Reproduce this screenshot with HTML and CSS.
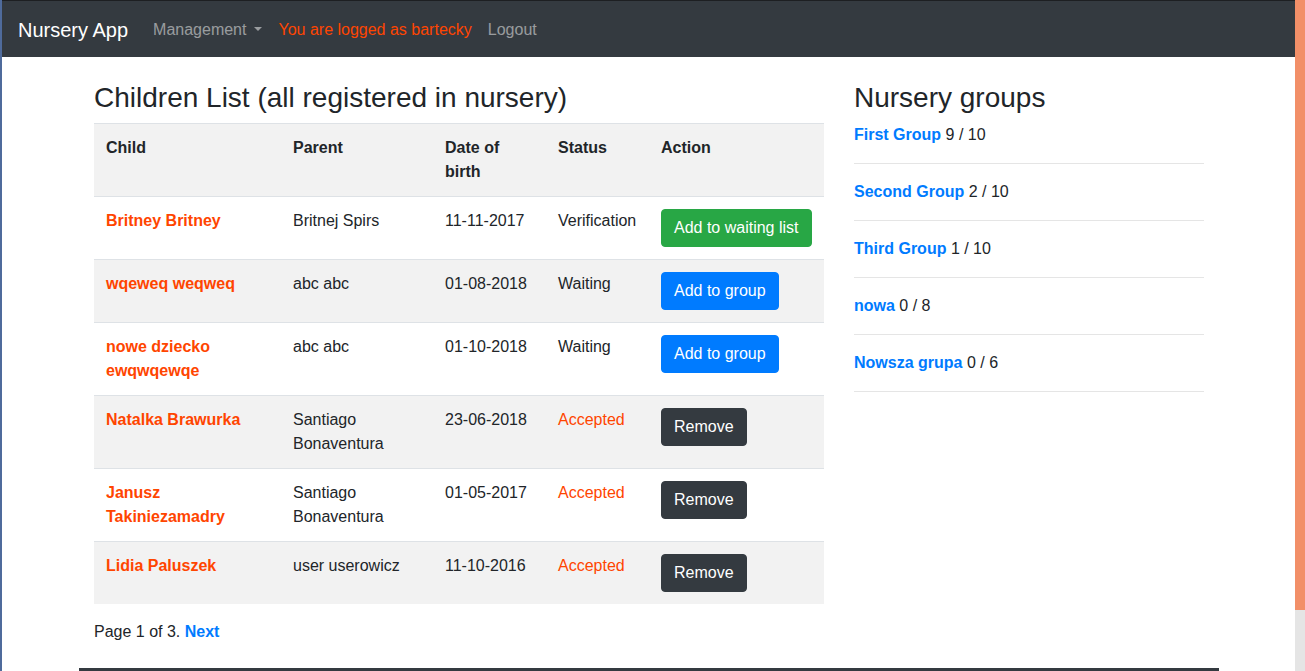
FILE: index.html
```html
<!DOCTYPE html>
<html lang="en">
<head>
<meta charset="utf-8">
<title>Nursery App</title>
<link rel="stylesheet" href="styles.css">
</head>
<body>
<div class="page">
<nav class="navbar">
  <a class="brand" href="#">Nursery App</a>
  <ul class="nav">
    <li><a class="nav-link dropdown" href="#">Management</a></li>
    <li><span class="nav-link user">You are logged as bartecky</span></li>
    <li><a class="nav-link" href="#">Logout</a></li>
  </ul>
</nav>
<div class="main-wrap">
<main class="container">
  <div class="row">
    <section class="col-main">
      <h3 class="title">Children List (all registered in nursery)</h3>
      <table class="table">
        <colgroup>
          <col class="c-child"><col class="c-parent"><col class="c-date"><col class="c-status"><col class="c-action">
        </colgroup>
        <thead>
          <tr><th>Child</th><th>Parent</th><th>Date of birth</th><th>Status</th><th>Action</th></tr>
        </thead>
        <tbody>
          <tr>
            <td><a class="child" href="#">Britney Britney</a></td>
            <td>Britnej Spirs</td>
            <td>11-11-2017</td>
            <td>Verification</td>
            <td><button class="btn btn-success">Add to waiting list</button></td>
          </tr>
          <tr>
            <td><a class="child" href="#">wqeweq weqweq</a></td>
            <td>abc abc</td>
            <td>01-08-2018</td>
            <td>Waiting</td>
            <td><button class="btn btn-primary">Add to group</button></td>
          </tr>
          <tr>
            <td><a class="child" href="#">nowe dziecko ewqwqewqe</a></td>
            <td>abc abc</td>
            <td>01-10-2018</td>
            <td>Waiting</td>
            <td><button class="btn btn-primary">Add to group</button></td>
          </tr>
          <tr>
            <td><a class="child" href="#">Natalka Brawurka</a></td>
            <td>Santiago Bonaventura</td>
            <td>23-06-2018</td>
            <td class="accepted">Accepted</td>
            <td><button class="btn btn-dark">Remove</button></td>
          </tr>
          <tr>
            <td><a class="child" href="#">Janusz Takiniezamadry</a></td>
            <td>Santiago Bonaventura</td>
            <td>01-05-2017</td>
            <td class="accepted">Accepted</td>
            <td><button class="btn btn-dark">Remove</button></td>
          </tr>
          <tr>
            <td><a class="child" href="#">Lidia Paluszek</a></td>
            <td>user userowicz</td>
            <td>11-10-2016</td>
            <td class="accepted">Accepted</td>
            <td><button class="btn btn-dark">Remove</button></td>
          </tr>
        </tbody>
      </table>
      <p class="pager">Page 1 of 3. <a class="next" href="#">Next</a></p>
    </section>
    <aside class="col-side">
      <h3 class="title">Nursery groups</h3>
      <div class="group"><a href="#">First Group</a> 9 / 10</div>
      <hr>
      <div class="group"><a href="#">Second Group</a> 2 / 10</div>
      <hr>
      <div class="group"><a href="#">Third Group</a> 1 / 10</div>
      <hr>
      <div class="group"><a href="#">nowa</a> 0 / 8</div>
      <hr>
      <div class="group"><a href="#">Nowsza grupa</a> 0 / 6</div>
      <hr>
    </aside>
  </div>
</main>
<footer class="footer"></footer>
</div>
</div>
<div class="scrollbar">
  <div class="thumb"></div>
  <div class="track"></div>
</div>
</body>
</html>
```

FILE: styles.css
```css
* {
  box-sizing: border-box;
}
html,
body {
  height: 100%;
  overflow: hidden;
}
body {
  margin: 0;
  display: flex;
  border-left: 2px solid #4f6b9c;
  font-family: "Liberation Sans", Arial, sans-serif;
  font-size: 16px;
  line-height: 1.5;
  color: #212529;
  background: #fff;
}
a {
  text-decoration: none;
}
.page {
  flex: 1;
  min-width: 0;
  height: 100%;
  overflow: hidden;
  border-top: 1px solid #1d1f22;
}

/* fake scrollbar */
.scrollbar {
  width: 10px;
  flex: none;
  display: flex;
  flex-direction: column;
  background: #e5e5e5;
}
.thumb {
  height: 610px;
  background: #f28f68;
}
.track {
  flex: 1;
}

/* navbar */
.navbar {
  display: flex;
  align-items: center;
  height: 56px;
  padding: 9px 16px 7px;
  background: #343a40;
}
.brand {
  font-size: 20px;
  line-height: 30px;
  padding: 5px 0;
  margin-right: 17px;
  color: #fff;
}
.nav {
  display: flex;
  list-style: none;
  margin: 0;
  padding: 0;
}
.nav-link {
  display: block;
  padding: 8px 8px;
  color: rgba(255, 255, 255, 0.5);
}
.nav-link.user {
  color: #ff4500;
}
.dropdown::after {
  content: "";
  display: inline-block;
  margin-left: 8px;
  vertical-align: 0.255em;
  border-top: 0.3em solid;
  border-right: 0.3em solid transparent;
  border-left: 0.3em solid transparent;
}

/* layout */
.main-wrap {
  padding-left: 1px;
}
.container {
  width: 1140px;
  margin: 0 auto;
  padding: 0 15px;
}
.row {
  display: flex;
  margin: 0 -15px;
}
.col-main {
  width: 760px;
  padding: 0 15px;
}
.col-side {
  width: 380px;
  padding: 0 15px;
}
.title {
  font-size: 28px;
  font-weight: 500;
  line-height: 1.2;
  margin: 24px 0 8px;
}

/* table */
.table {
  width: 100%;
  border-collapse: collapse;
  margin-bottom: 16px;
}
.c-child { width: 187px; }
.c-parent { width: 152px; }
.c-date { width: 113px; }
.c-status { width: 103px; }
.c-action { width: 175px; }
.table th,
.table td {
  padding: 12px;
  text-align: left;
  vertical-align: top;
  border-top: 1px solid #dee2e6;
}
.table thead th {
  font-weight: 700;
  background: #f2f2f2;
}
.table tbody tr:nth-child(even) {
  background: #f2f2f2;
}
.child {
  font-weight: 700;
  color: #ff4500;
}
.accepted {
  color: #ff4500;
}
.btn {
  display: inline-block;
  font-family: inherit;
  font-size: 16px;
  line-height: 24px;
  padding: 6px 12px;
  border: 1px solid transparent;
  border-radius: 4px;
  color: #fff;
  cursor: pointer;
}
.btn-success {
  background: #28a745;
  border-color: #28a745;
}
.btn-primary {
  background: #007bff;
  border-color: #007bff;
}
.btn-dark {
  background: #343a40;
  border-color: #343a40;
}
.pager {
  margin: 0 0 16px;
}
.next {
  font-weight: 700;
  color: #007bff;
}

/* groups */
.group a {
  font-weight: 700;
  color: #007bff;
}
.col-side hr {
  margin: 16px 0;
  border: 0;
  border-top: 1px solid rgba(0, 0, 0, 0.1);
}

/* footer */
.footer {
  width: 1140px;
  height: 70px;
  margin: 8px auto 0;
  background: #343a40;
}
```
